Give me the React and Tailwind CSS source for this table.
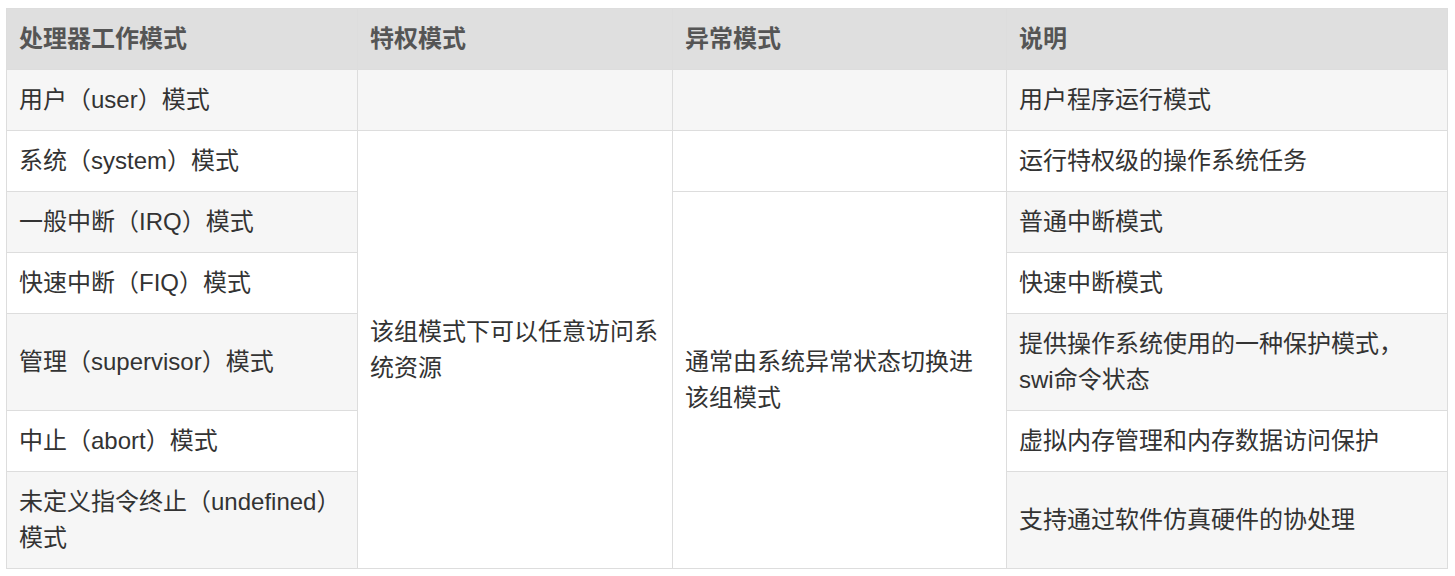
import React from "react";

const font = {
  fontFamily: '"Liberation Sans", "Noto Sans CJK SC", sans-serif',
};

const rows = [
  { mode: "用户（user）模式", desc: "用户程序运行模式" },
  { mode: "系统（system）模式", desc: "运行特权级的操作系统任务" },
  { mode: "一般中断（IRQ）模式", desc: "普通中断模式" },
  { mode: "快速中断（FIQ）模式", desc: "快速中断模式" },
  { mode: "管理（supervisor）模式", desc: "提供操作系统使用的一种保护模式，swi命令状态" },
  { mode: "中止（abort）模式", desc: "虚拟内存管理和内存数据访问保护" },
  { mode: "未定义指令终止（undefined）模式", desc: "支持通过软件仿真硬件的协处理" },
];

const cell = "border border-[#dddddd] px-3 py-3 align-middle text-left";

export default function App() {
  return (
    <div className="bg-white min-h-[576px] pt-[8px] text-[24px] leading-[36px] text-[#333333]" style={font}>
      <div className="pl-[6px] pr-[7px]">
        <table className="w-full border-collapse table-fixed">
          <colgroup>
            <col className="w-[351px]" />
            <col className="w-[315px]" />
            <col className="w-[334px]" />
            <col />
          </colgroup>
          <thead>
            <tr className="bg-[#dfdfdf]">
              <th className={`${cell} font-bold text-[#555555]`}>处理器工作模式</th>
              <th className={`${cell} font-bold text-[#555555]`}>特权模式</th>
              <th className={`${cell} font-bold text-[#555555]`}>异常模式</th>
              <th className={`${cell} font-bold text-[#555555]`}>说明</th>
            </tr>
          </thead>
          <tbody>
            {rows.map((r, i) => (
              <tr key={i} className={i % 2 === 0 ? "bg-[#f6f6f6]" : "bg-white"}>
                <td className={cell}>{r.mode}</td>
                {i === 0 && <td className={cell}></td>}
                {i === 1 && (
                  <td rowSpan={6} className={`${cell} bg-white`}>
                    该组模式下可以任意访问系统资源
                  </td>
                )}
                {(i === 0 || i === 1) && <td className={cell}></td>}
                {i === 2 && (
                  <td rowSpan={5} className={`${cell} bg-white`}>
                    通常由系统异常状态切换进该组模式
                  </td>
                )}
                <td className={cell}>{r.desc}</td>
              </tr>
            ))}
          </tbody>
        </table>
      </div>
    </div>
  );
}
